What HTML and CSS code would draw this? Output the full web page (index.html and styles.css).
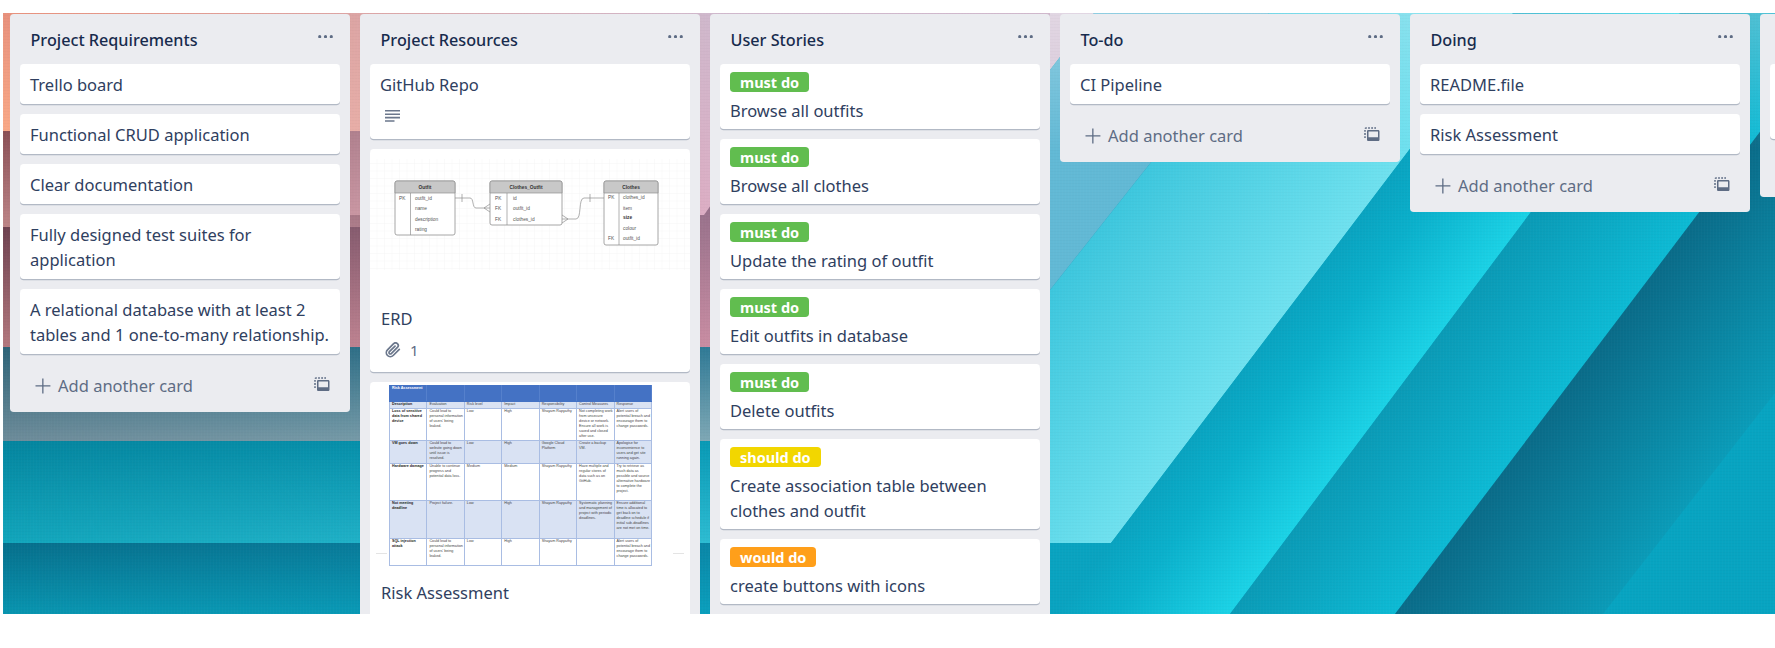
FILE: index.html
```html
<!DOCTYPE html>
<html lang="en">
<head>
<meta charset="utf-8">
<title>Trello board</title>
<link rel="stylesheet" href="styles.css">
</head>
<body>
<svg class="icon-defs" aria-hidden="true">
  <symbol id="i-dots" viewBox="0 0 15 3.4"><circle cx="1.7" cy="1.7" r="1.6"/><circle cx="7.5" cy="1.7" r="1.6"/><circle cx="13.3" cy="1.7" r="1.6"/></symbol>
  <symbol id="i-plus" viewBox="0 0 16 16"><path d="M7.2 0.5h1.3v6.7h6.9v1.3H8.5v7H7.2v-7H0.5V7.2h6.7z"/></symbol>
  <symbol id="i-template" viewBox="0 0 16 15"><path d="M1 11V2.2C1 1.5 1.5 1 2.2 1H12" fill="none" stroke="currentColor" stroke-width="1.5" stroke-dasharray="1.8 1.3"/><path d="M4 3h10.2c.7 0 1.3.6 1.3 1.3v8.4c0 .7-.6 1.3-1.3 1.3H4.3c-.7 0-1.3-.6-1.3-1.3V4.3C3 3.6 3.5 3 4 3zm.5 1.5v5.7h9.5V4.5z" fill-rule="evenodd"/></symbol>
  <symbol id="i-desc" viewBox="0 0 15 12"><path d="M0 0h15v1.6H0zM0 3.4h15V5H0zM0 6.8h15v1.6H0zM0 10.2h9.5v1.6H0z"/></symbol>
  <symbol id="i-clip" viewBox="0 0 24 24"><path d="M21.44 11.05l-9.19 9.19a6 6 0 0 1-8.49-8.49l9.19-9.19a4 4 0 0 1 5.66 5.66l-9.2 9.19a2 2 0 0 1-2.83-2.83l8.49-8.48" fill="none" stroke="currentColor" stroke-width="2.6" stroke-linecap="round" stroke-linejoin="round"/></symbol>
</svg>

<main class="board">
  <svg class="backdrop" viewBox="3 13 1772 601" preserveAspectRatio="none" aria-hidden="true">
    <defs>
      <linearGradient id="fadeX" gradientUnits="userSpaceOnUse" x1="3" y1="0" x2="705" y2="0"><stop offset="0" stop-color="#000"/><stop offset="1" stop-color="#fff"/></linearGradient>
      <mask id="maskX" maskUnits="userSpaceOnUse" x="0" y="0" width="1100" height="648"><rect x="0" y="0" width="1100" height="648" fill="url(#fadeX)"/></mask>

      <linearGradient id="a1" x1="0" y1="0" x2="0" y2="1"><stop offset="0" stop-color="#e8917c"/><stop offset="1" stop-color="#f9a987"/></linearGradient>
      <linearGradient id="a2" x1="0" y1="0" x2="0" y2="1"><stop offset="0" stop-color="#8a4f55"/><stop offset="1" stop-color="#bd8587"/></linearGradient>
      <linearGradient id="a3" x1="0" y1="0" x2="0" y2="1"><stop offset="0" stop-color="#6e4250"/><stop offset="1" stop-color="#b3787e"/></linearGradient>
      <linearGradient id="a4" x1="0" y1="0" x2="0" y2="1"><stop offset="0" stop-color="#2e6478"/><stop offset="1" stop-color="#6e8c9a"/></linearGradient>
      <linearGradient id="a5" x1="0" y1="0" x2="0" y2="1"><stop offset="0" stop-color="#05859f"/><stop offset="1" stop-color="#12a6bc"/></linearGradient>
      <linearGradient id="a6" x1="0" y1="0" x2="0" y2="1"><stop offset="0" stop-color="#076f8c"/><stop offset="1" stop-color="#0995b0"/></linearGradient>

      <linearGradient id="b1" gradientUnits="userSpaceOnUse" x1="0" y1="13" x2="0" y2="215"><stop offset="0" stop-color="#cfb8cc"/><stop offset="1" stop-color="#dcaec4"/></linearGradient>
      <linearGradient id="b3" gradientUnits="userSpaceOnUse" x1="0" y1="205" x2="0" y2="347"><stop offset="0" stop-color="#96708a"/><stop offset="1" stop-color="#c98da3"/></linearGradient>
      <linearGradient id="b4" x1="0" y1="0" x2="0" y2="1"><stop offset="0" stop-color="#2f7a96"/><stop offset="1" stop-color="#7fa8b5"/></linearGradient>
      <linearGradient id="b5" x1="0" y1="0" x2="0" y2="1"><stop offset="0" stop-color="#0899b5"/><stop offset="1" stop-color="#2dbcd2"/></linearGradient>
      <linearGradient id="b6" x1="0" y1="0" x2="0" y2="1"><stop offset="0" stop-color="#0a86a6"/><stop offset="1" stop-color="#0a9fbd"/></linearGradient>

      <linearGradient id="cLight" gradientUnits="userSpaceOnUse" x1="963" y1="400" x2="1125" y2="523"><stop offset="0" stop-color="#3cc6dd"/><stop offset="1" stop-color="#6fe1ef"/></linearGradient>
      <linearGradient id="cB" gradientUnits="userSpaceOnUse" x1="1219" y1="400" x2="1327" y2="482"><stop offset="0" stop-color="#09a3c0"/><stop offset=".35" stop-color="#0ab0cb"/><stop offset="1" stop-color="#1bd2e6"/></linearGradient>
      <linearGradient id="cC" gradientUnits="userSpaceOnUse" x1="1390" y1="400" x2="1495" y2="480"><stop offset="0" stop-color="#0a9ab6"/><stop offset="1" stop-color="#0dbad4"/></linearGradient>
      <linearGradient id="cD" gradientUnits="userSpaceOnUse" x1="1556" y1="400" x2="1692" y2="503"><stop offset="0" stop-color="#0a6b88"/><stop offset="1" stop-color="#0a9cb9"/></linearGradient>
      <linearGradient id="topGlow" gradientUnits="userSpaceOnUse" x1="0" y1="13" x2="0" y2="150"><stop offset="0" stop-color="#fff" stop-opacity=".28"/><stop offset="1" stop-color="#fff" stop-opacity="0"/></linearGradient>
      <pattern id="weave" width="3" height="3" patternUnits="userSpaceOnUse"><path d="M0 0h3v1H0z" fill="#000" fill-opacity=".015"/><path d="M0 0h1v3H0z" fill="#fff" fill-opacity=".015"/></pattern>
    </defs>

    <rect x="3" y="13" width="1050" height="118" fill="url(#a1)"/>
    <rect x="3" y="131" width="1050" height="96" fill="url(#a2)"/>
    <rect x="3" y="227" width="1050" height="120" fill="url(#a3)"/>
    <rect x="3" y="347" width="1050" height="94" fill="url(#a4)"/>
    <rect x="3" y="441" width="1050" height="102" fill="url(#a5)"/>
    <rect x="3" y="543" width="1050" height="71" fill="url(#a6)"/>

    <g mask="url(#maskX)">
      <polygon points="3,13 1053,13 1053,215 705,215 720,190 3,190" fill="url(#b1)"/>
      <polygon points="3,131 1053,131 1053,215 3,215" fill="url(#b1)"/>
      <polygon points="3,215 704,215 720,192 1053,192 1053,347 3,347" fill="url(#b3)"/>
      <rect x="3" y="347" width="1050" height="94" fill="url(#b4)"/>
      <rect x="3" y="441" width="1050" height="102" fill="url(#b5)"/>
      <rect x="3" y="543" width="1050" height="71" fill="url(#b6)"/>
    </g>

    <rect x="1050" y="13" width="725" height="601" fill="#07a4c1"/>
    <polygon points="1050,290 1269,13 1513,13 1111,543 1050,543" fill="url(#cLight)"/>
    <polygon points="1050,13 1094,13 1050,70" fill="#d6c6d8"/>
    <polygon points="1094,13 1269,13 1050,290 1050,70" fill="#62b9d5"/>
    <polygon points="1513,13 1680,13 1230,614 1050,614 1050,543 1111,543" fill="url(#cB)"/>
    <polygon points="1680,13 1850,13 1395,614 1230,614" fill="url(#cC)"/>
    <polygon points="1775,112 1775,393 1603,614 1395,614" fill="url(#cD)"/>
    <rect x="1050" y="13" width="725" height="137" fill="url(#topGlow)"/>
    <rect x="3" y="13" width="1772" height="601" fill="url(#weave)"/>
  </svg>

  <section class="list">
    <header class="list-head"><h2 class="list-title">Project Requirements</h2><svg class="dots"><use href="#i-dots"/></svg></header>
    <div class="cards">
      <article class="card"><p class="card-text">Trello board</p></article>
      <article class="card"><p class="card-text">Functional CRUD application</p></article>
      <article class="card"><p class="card-text">Clear documentation</p></article>
      <article class="card"><p class="card-text">Fully designed test suites for application</p></article>
      <article class="card"><p class="card-text">A relational database with at least 2 tables and 1 one-to-many relationship.</p></article>
    </div>
    <footer class="add"><svg class="plus"><use href="#i-plus"/></svg><span class="add-text">Add another card</span><svg class="tmpl"><use href="#i-template"/></svg></footer>
  </section>

  <section class="list list-tall">
    <header class="list-head"><h2 class="list-title">Project Resources</h2><svg class="dots"><use href="#i-dots"/></svg></header>
    <div class="cards">
      <article class="card"><p class="card-text">GitHub Repo</p><div class="badges"><svg class="desc"><use href="#i-desc"/></svg></div></article>

      <article class="card card-cover">
        <svg class="erd" viewBox="0 0 320 149" role="img" aria-label="Entity relationship diagram">
          <defs><pattern id="grid" width="7.5" height="7.5" patternUnits="userSpaceOnUse"><path d="M7.5 0V7.5M0 7.5H7.5" stroke="#f1f1f1" stroke-width=".6" fill="none"/></pattern></defs>
          <rect x="0" y="10" width="320" height="111" fill="url(#grid)"/>
          <g class="erd-line">
            <path d="M85 49H100C104 49 102 59 106 59H120M92 45V53"/>
            <path d="M120 55L114 59L120 63"/>
            <path d="M192 70H206C212 70 208 49 214 49H234M220 45V53"/>
            <path d="M192 66L198 70L192 74"/>
          </g>
          <g class="erd-box">
            <rect x="25" y="32" width="60" height="54" rx="2"/><path d="M25 34a2 2 0 0 1 2-2h56a2 2 0 0 1 2 2v10H25z" class="erd-head"/><path d="M40.5 44V86"/>
            <rect x="120" y="32" width="72" height="44" rx="2"/><path d="M120 34a2 2 0 0 1 2-2h68a2 2 0 0 1 2 2v10h-72z" class="erd-head"/><path d="M137 44V76"/>
            <rect x="234" y="32" width="54" height="64" rx="2"/><path d="M234 34a2 2 0 0 1 2-2h50a2 2 0 0 1 2 2v10h-54z" class="erd-head"/><path d="M249 44V96"/>
          </g>
          <g class="erd-text">
            <text x="55" y="40" text-anchor="middle" class="erd-bold">Outfit</text>
            <text x="29" y="50.5">PK</text><text x="45" y="50.5">outfit_id</text>
            <text x="45" y="61">name</text><text x="45" y="71.5">description</text><text x="45" y="82">rating</text>
            <text x="156" y="40" text-anchor="middle" class="erd-bold">Clothes_Outfit</text>
            <text x="125" y="50.5">PK</text><text x="143" y="50.5">id</text>
            <text x="125" y="61">FK</text><text x="143" y="61">outfit_id</text>
            <text x="125" y="71.5">FK</text><text x="143" y="71.5">clothes_id</text>
            <text x="261" y="40" text-anchor="middle" class="erd-bold">Clothes</text>
            <text x="238" y="50">PK</text><text x="253" y="50">clothes_id</text>
            <text x="253" y="60.5">item</text><text x="253" y="70" class="erd-bold">size</text><text x="253" y="80.5">colour</text>
            <text x="238" y="91">FK</text><text x="253" y="91">outfit_id</text>
          </g>
        </svg>
        <p class="card-text">ERD</p>
        <div class="badges"><svg class="clip"><use href="#i-clip"/></svg><span class="badge-num">1</span></div>
      </article>

      <article class="card card-cover card-cut">
        <div class="risk-cover">
          <table class="risk">
            <tr class="r-head"><th>Risk Assessment</th><td></td><td></td><td></td><td></td><td></td><td></td></tr>
            <tr class="r-sub band"><th>Description</th><td>Evaluation</td><td>Risk level</td><td>Impact</td><td>Responsibility</td><td>Control Measures</td><td>Response</td></tr>
            <tr class="r-1"><th>Loss of sensitive data from shared device</th><td>Could lead to personal information of users' being leaked.</td><td>Low</td><td>High</td><td>Shayam Rapyathy</td><td>Not completing work from unsecure device or network. Ensure all work is saved and closed after use.</td><td>Alert users of potential breach and encourage them to change passwords.</td></tr>
            <tr class="r-2 band"><th>VM goes down</th><td>Could lead to website going down until issue is resolved.</td><td>Low</td><td>High</td><td>Google Cloud Platform</td><td>Create a backup VM.</td><td>Apologise for inconvenience to users and get site running again.</td></tr>
            <tr class="r-3"><th>Hardware damage</th><td>Unable to continue progress and potential data loss.</td><td>Medium</td><td>Medium</td><td>Shayam Rapyathy</td><td>Have multiple and regular stores of data such as on GitHub.</td><td>Try to retrieve as much data as possible and source alternative hardware to complete the project.</td></tr>
            <tr class="r-4 band"><th>Not meeting deadline</th><td>Project failure.</td><td>Low</td><td>High</td><td>Shayam Rapyathy</td><td>Systematic planning and management of project with periodic deadlines.</td><td>Ensure additional time is allocated to get back on to deadline schedule if initial sub-deadlines are not met on time.</td></tr>
            <tr class="r-5"><th>SQL injection attack</th><td>Could lead to personal information of users' being leaked.</td><td>Low</td><td>High</td><td>Shayam Rapyathy</td><td></td><td>Alert users of potential breach and encourage them to change passwords.</td></tr>
          </table>
        </div>
        <p class="card-text">Risk Assessment</p>
      </article>
    </div>
  </section>

  <section class="list list-tall">
    <header class="list-head"><h2 class="list-title">User Stories</h2><svg class="dots"><use href="#i-dots"/></svg></header>
    <div class="cards">
      <article class="card card-label"><span class="label label-green">must do</span><p class="card-text">Browse all outfits</p></article>
      <article class="card card-label"><span class="label label-green">must do</span><p class="card-text">Browse all clothes</p></article>
      <article class="card card-label"><span class="label label-green">must do</span><p class="card-text">Update the rating of outfit</p></article>
      <article class="card card-label"><span class="label label-green">must do</span><p class="card-text">Edit outfits in database</p></article>
      <article class="card card-label"><span class="label label-green">must do</span><p class="card-text">Delete outfits</p></article>
      <article class="card card-label"><span class="label label-yellow">should do</span><p class="card-text">Create association table between clothes and outfit</p></article>
      <article class="card card-label"><span class="label label-orange">would do</span><p class="card-text">create buttons with icons</p></article>
    </div>
  </section>

  <section class="list">
    <header class="list-head"><h2 class="list-title">To-do</h2><svg class="dots"><use href="#i-dots"/></svg></header>
    <div class="cards">
      <article class="card"><p class="card-text">CI Pipeline</p></article>
    </div>
    <footer class="add"><svg class="plus"><use href="#i-plus"/></svg><span class="add-text">Add another card</span><svg class="tmpl"><use href="#i-template"/></svg></footer>
  </section>

  <section class="list">
    <header class="list-head"><h2 class="list-title">Doing</h2><svg class="dots"><use href="#i-dots"/></svg></header>
    <div class="cards">
      <article class="card"><p class="card-text">README.file</p></article>
      <article class="card"><p class="card-text">Risk Assessment</p></article>
    </div>
    <footer class="add"><svg class="plus"><use href="#i-plus"/></svg><span class="add-text">Add another card</span><svg class="tmpl"><use href="#i-template"/></svg></footer>
  </section>

  <section class="list">
    <header class="list-head"></header>
    <div class="cards">
      <article class="card"><p class="card-text">&nbsp;</p><div class="badges"></div></article>
    </div>
    <footer class="add"></footer>
  </section>
</main>
</body>
</html>
```

FILE: styles.css
```css
* { box-sizing: border-box; }

html, body { margin: 0; padding: 0; background: #fff; }

body {
  font-family: "Noto Sans", "Open Sans", sans-serif;
  color: #172b4d;
  height: 648px;
  overflow: hidden;
  padding: 13px 0 0 3px;
}

.icon-defs { display: none; }

.board {
  position: relative;
  display: flex;
  align-items: flex-start;
  gap: 10px;
  width: 1772px;
  height: 601px;
  padding: 1px 0 0 7px;
  overflow: hidden;
}

.backdrop {
  position: absolute;
  left: 0;
  top: 0;
  width: 1772px;
  height: 601px;
}

.list {
  position: relative;
  flex: 0 0 340px;
  width: 340px;
  padding: 0 10px;
  background: #ebecf0;
  border-radius: 3.75px;
}

.list-tall {
  align-self: stretch;
  overflow: hidden;
  border-radius: 3.75px 3.75px 0 0;
}

.list-head {
  display: flex;
  align-items: center;
  justify-content: space-between;
  height: 50px;
  padding: 0 7px 2px 10.5px;
}

.list-title {
  margin: 0;
  font-size: 16.2px;
  line-height: 25px;
  font-weight: 500;
  color: #172b4d;
  padding-top: 5px;
}

.dots {
  width: 15px;
  height: 3.4px;
  margin-top: -3px;
  fill: #5e6c84;
}

.cards {
  display: flex;
  flex-direction: column;
  gap: 10px;
}

.card {
  flex: none;
  background: #fff;
  border-radius: 3.75px;
  box-shadow: 0 1.25px 0 rgba(9, 30, 66, .25);
  padding: 7.5px 10px;
}

.card-text {
  margin: 0;
  font-size: 16.5px;
  line-height: 25px;
  color: #2f4060;
}

.badges {
  display: flex;
  align-items: center;
  gap: 9px;
  height: 35px;
  padding: 4px 1px 0 5px;
  color: #6b778c;
}

.desc {
  width: 15px;
  height: 12px;
  fill: #6b778c;
}

.clip {
  width: 16px;
  height: 16px;
  color: #6b778c;
}

.badge-num {
  font-size: 15px;
  line-height: 20px;
  color: #5e6c84;
}

.card-cover {
  padding: 0 0 7.5px;
}

.card-cut {
  padding-bottom: 30px;
}

.card-cover .card-text {
  padding: 7.5px 11px 0;
}

.card-cover .badges {
  height: 20px;
  margin: 9px 0 5px;
  padding: 0 0 0 15px;
}

.erd {
  display: block;
  width: 320px;
  height: 149px;
}

.erd-line path {
  fill: none;
  stroke: #8d8d8d;
  stroke-width: .7;
}

.erd-box rect {
  fill: #fff;
  stroke: #909090;
  stroke-width: .8;
}

.erd-box path {
  fill: none;
  stroke: #909090;
  stroke-width: .7;
}

.erd-box .erd-head {
  fill: #c8c8c8;
}

.erd-text {
  font-family: "Liberation Sans", sans-serif;
  font-size: 4.8px;
  fill: #555;
}

.erd-text .erd-bold {
  font-weight: 700;
  fill: #333;
}

.risk-cover {
  position: relative;
  height: 190px;
  padding: 3px 18px 0 19px;
}

.risk-cover::before,
.risk-cover::after {
  content: "";
  position: absolute;
  top: 171px;
  width: 11px;
  height: 1px;
  background: #e4e4e4;
}

.risk-cover::before { left: 6px; }
.risk-cover::after { right: 6px; }

.risk {
  width: 263px;
  height: 180px;
  table-layout: fixed;
  border-collapse: collapse;
  font-family: "Liberation Sans", sans-serif;
  font-size: 3.7px;
  line-height: 5px;
  color: #444;
  background: #fff;
}

.risk th,
.risk td {
  border: .6px solid #a9bde3;
  padding: 0 1px 0 2px;
  vertical-align: top;
  text-align: left;
  overflow: hidden;
  font-weight: 400;
}

.risk th {
  font-weight: 700;
  color: #222;
}

.risk .band th,
.risk .band td { background: #d9e2f3; }

.risk .r-head th,
.risk .r-head td {
  background: #4472c4;
  color: #fff;
  border-color: #4472c4;
  border-right-color: #5580cc;
}

.r-head { height: 16px; }
.r-sub { height: 7px; }
.r-1 { height: 32px; }
.r-2 { height: 23px; }
.r-3 { height: 37px; }
.r-4 { height: 38px; }
.r-5 { height: 27px; }

.card-label {
  padding: 8px 10px 6.5px;
}

.label {
  display: block;
  width: fit-content;
  height: 20px;
  padding: 0 10px;
  border-radius: 3.75px;
  font-size: 14.5px;
  line-height: 20px;
  font-weight: 700;
  color: #fff;
}

.label-green { background: #61bd4f; }
.label-yellow { background: #f2d600; }
.label-orange { background: #ff9f1a; }

.card-label .card-text {
  margin-top: 5.5px;
}

.add {
  display: flex;
  align-items: center;
  height: 58px;
  padding: 10px 10px 5px 15px;
  color: #5e6c84;
}

.plus {
  flex: none;
  width: 16px;
  height: 16px;
  fill: #5e6c84;
}

.add-text {
  flex: 1;
  margin-left: 7px;
  font-size: 16.5px;
  line-height: 25px;
}

.tmpl {
  flex: none;
  width: 16px;
  height: 15px;
  margin-top: -2px;
  fill: #5e6c84;
  color: #5e6c84;
}
```
